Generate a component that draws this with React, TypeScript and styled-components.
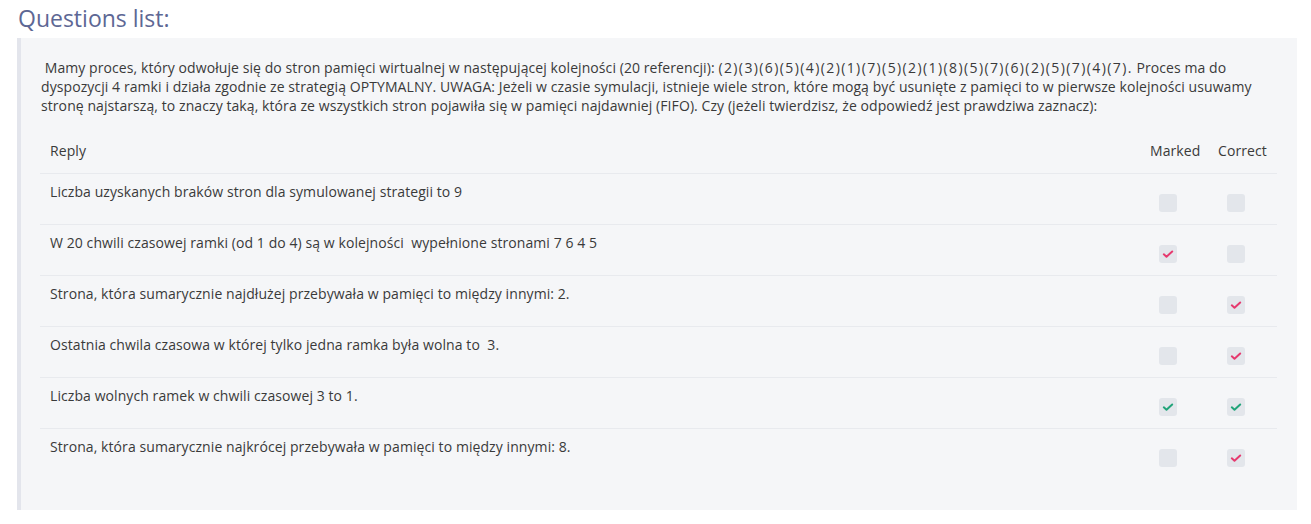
import React from "react";
import styled, { createGlobalStyle } from "styled-components";

const GlobalStyle = createGlobalStyle`
  html, body { margin: 0; padding: 0; background: #ffffff; }
  body { font-family: "Open Sans", "Noto Sans", sans-serif; color: #3b3b3b; }
  * { box-sizing: border-box; }
`;

const Page = styled.div`
  padding: 3px 14px 0 17px;
`;

const Title = styled.h3`
  margin: 0 0 5px 1px;
  font-size: 23px;
  line-height: 30px;
  font-weight: 500;
  color: #5d6794;
`;

const Panel = styled.section`
  background: #f5f6f8;
  border-left: 4px solid #e3e5ec;
  padding: 20px 20px 31px 19px;
`;

const Prompt = styled.p`
  margin: 0 0 13px 1px;
  font-size: 14px;
  letter-spacing: 0.08px;
  line-height: 19px;
  color: #3a3a3a;
`;

const Refs = styled.span`
  letter-spacing: 1.4px;
`;

const Row = styled.div<{ $head?: boolean }>`
  display: grid;
  grid-template-columns: 1fr 68px 69px;
  height: ${(p) => (p.$head ? "45px" : "51px")};
  border-top: ${(p) => (p.$head ? "none" : "1px solid #e8eaee")};
  font-size: 14px;
  letter-spacing: 0.08px;
  color: #3a3a3a;
`;

const HeadCell = styled.div`
  display: flex;
  align-items: center;
  padding: 0 10px;
  white-space: nowrap;
`;

const TextCell = styled.div`
  padding: 8px 10px 0 10px;
  line-height: 20px;
  white-space: pre-wrap;
`;

const BoxCell = styled.div`
  padding: 20px 0 0 19px;
`;

const Box = styled.span`
  display: flex;
  align-items: center;
  justify-content: center;
  width: 18px;
  height: 18px;
  border-radius: 3px;
  background: #e3e6eb;
`;

type Tone = "pink" | "green";

const Check = ({ tone }: { tone: Tone }) => (
  <svg width="12" height="12" viewBox="0 0 12 12">
    <path
      d="M1.8 6.3 L4.5 8.7 L10.2 3.5"
      fill="none"
      stroke={tone === "pink" ? "#e63a6f" : "#22a47a"}
      strokeWidth="2"
      strokeLinecap="round"
      strokeLinejoin="round"
    />
  </svg>
);

const CheckBox = ({ on, tone }: { on: boolean; tone: Tone }) => (
  <Box>{on && <Check tone={tone} />}</Box>
);

const rows: { text: string; marked: boolean; correct: boolean }[] = [
  { text: "Liczba uzyskanych braków stron dla symulowanej strategii to 9", marked: false, correct: false },
  { text: "W 20 chwili czasowej ramki (od 1 do 4) są w kolejności  wypełnione stronami 7 6 4 5", marked: true, correct: false },
  { text: "Strona, która sumarycznie najdłużej przebywała w pamięci to między innymi: 2.", marked: false, correct: true },
  { text: "Ostatnia chwila czasowa w której tylko jedna ramka była wolna to  3.", marked: false, correct: true },
  { text: "Liczba wolnych ramek w chwili czasowej 3 to 1.", marked: true, correct: true },
  { text: "Strona, która sumarycznie najkrócej przebywała w pamięci to między innymi: 8.", marked: false, correct: true },
];

export default function App() {
  return (
    <Page>
      <GlobalStyle />
      <Title>Questions list:</Title>
      <Panel>
        <Prompt>
          {"\u00a0"}Mamy proces, który odwołuje się do stron pamięci wirtualnej w następującej kolejności (20 referencji):{" "}
          <Refs>(2)(3)(6)(5)(4)(2)(1)(7)(5)(2)(1)(8)(5)(7)(6)(2)(5)(7)(4)(7).</Refs> Proces ma do dyspozycji 4 ramki i działa zgodnie ze strategią OPTYMALNY. UWAGA: Jeżeli w czasie symulacji, istnieje wiele stron, które mogą być usunięte z pamięci to w pierwsze kolejności usuwamy stronę najstarszą, to znaczy taką, która ze wszystkich stron pojawiła się w pamięci najdawniej (FIFO). Czy (jeżeli twierdzisz, że odpowiedź jest prawdziwa zaznacz):
        </Prompt>
        <Row $head>
          <HeadCell>Reply</HeadCell>
          <HeadCell>Marked</HeadCell>
          <HeadCell>Correct</HeadCell>
        </Row>
        {rows.map((r, i) => {
          const tone: Tone = r.marked && r.correct ? "green" : "pink";
          return (
            <Row key={i}>
              <TextCell>{r.text}</TextCell>
              <BoxCell>
                <CheckBox on={r.marked} tone={tone} />
              </BoxCell>
              <BoxCell>
                <CheckBox on={r.correct} tone={tone} />
              </BoxCell>
            </Row>
          );
        })}
      </Panel>
    </Page>
  );
}
